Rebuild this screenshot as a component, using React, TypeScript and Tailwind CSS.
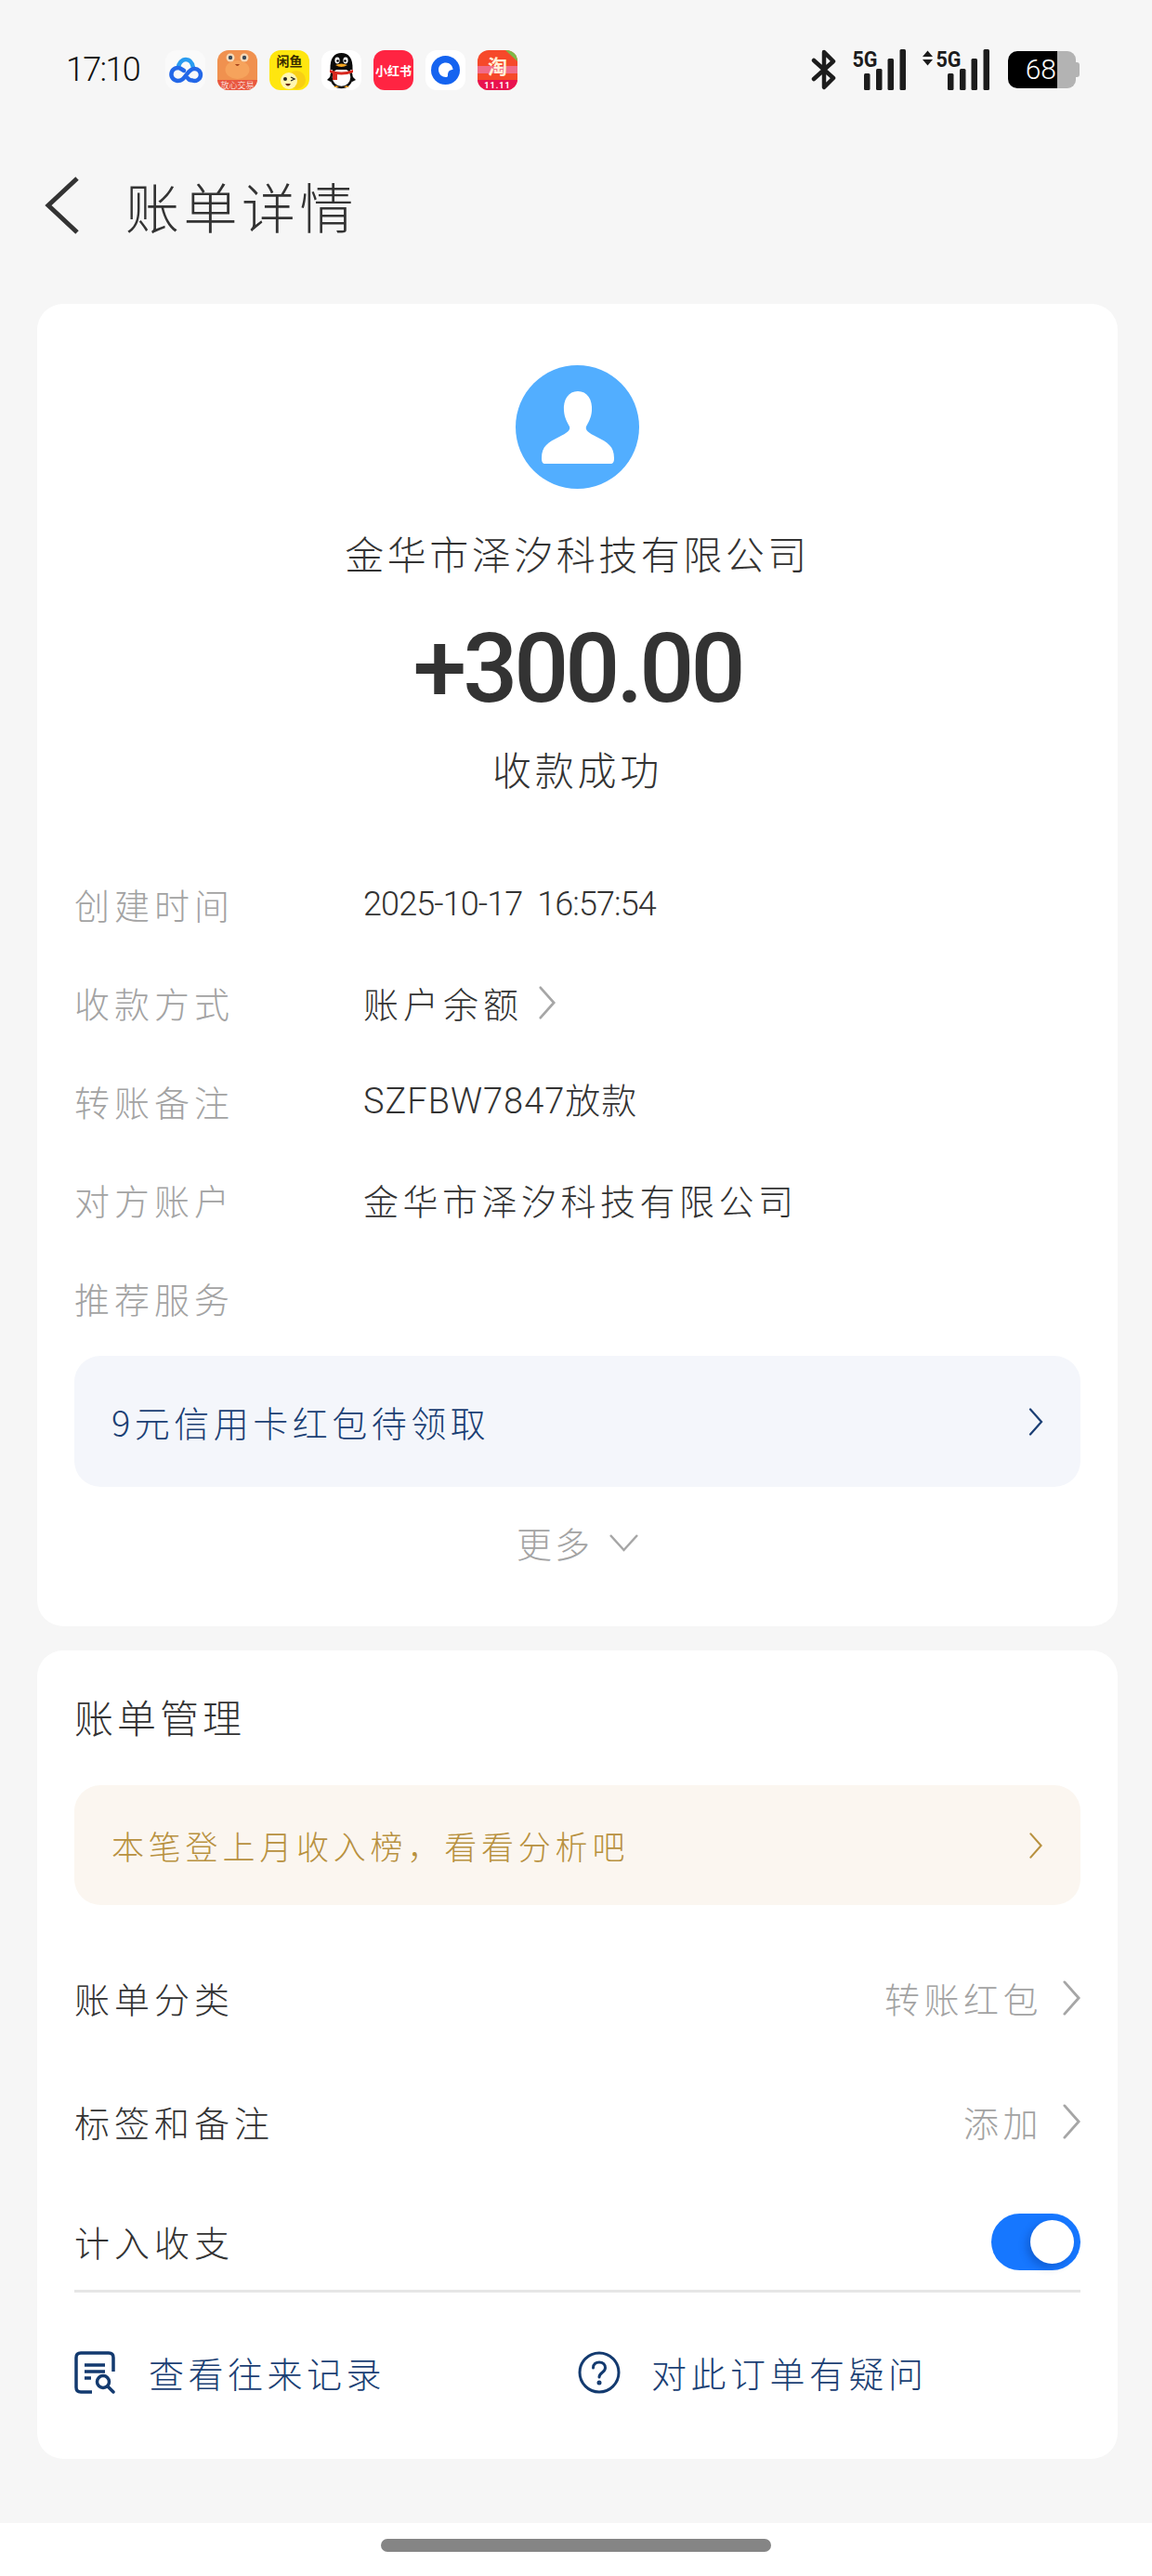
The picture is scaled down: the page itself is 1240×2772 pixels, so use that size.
const cjk = "font-['Noto_Sans_CJK_SC','Noto_Sans',sans-serif] font-light";

function Chevron({ className, color = "#a6a6a6", width = 3 }: { className: string; color?: string; width?: number }) {
  return (
    <svg viewBox="0 0 20 40" className={className} fill="none">
      <path d="M2 2 L18 20 L2 38" stroke={color} strokeWidth={width} strokeLinecap="round" strokeLinejoin="miter" />
    </svg>
  );
}

function AppIcon({ bg, children }: { bg: string; children: React.ReactNode }) {
  return (
    <div className={`w-[43px] h-[43px] rounded-[12px] overflow-hidden ${bg}`}>
      <svg viewBox="0 0 43 43" className="w-full h-full">
        {children}
      </svg>
    </div>
  );
}

function NetdiskIcon() {
  return (
    <AppIcon bg="bg-[#fafafa]">
      <path d="M14 19 C14 14 18 10 22 10 C26 10 29 13 30 19" fill="none" stroke="#2a9cf0" strokeWidth="4.500" strokeLinecap="round" />
      <path
        d="M20 22 L16 19.500 A7 7 0 1 0 13 33 C18 33 20 30 23 26 C26 22 28 20 31 20 A6.500 6.500 0 1 1 29 32.500 C27 32.500 25 31.500 24 30"
        fill="none"
        stroke="#2468e8"
        strokeWidth="4.500"
        strokeLinecap="round"
      />
    </AppIcon>
  );
}

function CrabIcon() {
  return (
    <AppIcon bg="bg-[#f0914f]">
      <ellipse cx="21.500" cy="21" rx="13" ry="10" fill="#f6a35c" />
      <circle cx="14" cy="8" r="4.500" fill="#f5d9b8" />
      <circle cx="29" cy="8" r="4.500" fill="#f5d9b8" />
      <circle cx="14" cy="8" r="2.200" fill="#3a4a5a" />
      <circle cx="29" cy="8" r="2.200" fill="#3a4a5a" />
      <path d="M19 15 Q21.500 19 24 15 Z" fill="#a8461d" />
      <rect x="0" y="32" width="43" height="11" fill="#e9573f" />
      <text x="21.500" y="40.500" textAnchor="middle" fontSize="9" fill="#fff" fontFamily="Noto Sans CJK SC">放心交易</text>
    </AppIcon>
  );
}

function XianyuIcon() {
  return (
    <AppIcon bg="bg-[#ffe60f]">
      <text x="21.500" y="17" textAnchor="middle" fontSize="14" fontWeight="700" fill="#3a2c00" fontFamily="Noto Sans CJK SC">闲鱼</text>
      <circle cx="29" cy="32" r="10" fill="#f8cf14" />
      <circle cx="21" cy="33" r="9" fill="#fff6b0" />
      <circle cx="17" cy="31" r="2" fill="#222" />
      <path d="M23 29 L27 31 L23 33" fill="none" stroke="#222" strokeWidth="1.300" />
      <path d="M17 36 Q20 41 23 36 Z" fill="#6b2a10" />
    </AppIcon>
  );
}

function QQIcon() {
  return (
    <AppIcon bg="bg-white">
      <ellipse cx="21.500" cy="29" rx="11" ry="11" fill="#fff" stroke="#111" strokeWidth="2.500" />
      <path d="M9.500 21 C9 8 14 3 21.500 3 C29 3 34 8 33.500 21 Z" fill="#0b0b0b" />
      <path d="M10 28 L6 32 L10 34 Z M33 28 L37 32 L33 34 Z" fill="#0b0b0b" />
      <ellipse cx="17" cy="11" rx="2.600" ry="3.400" fill="#fff" />
      <ellipse cx="26" cy="11" rx="2.600" ry="3.400" fill="#fff" />
      <circle cx="17.500" cy="11.500" r="1.300" fill="#000" />
      <circle cx="25.500" cy="11.500" r="1.300" fill="#000" />
      <path d="M15 16 Q21.500 13 28 16 Q21.500 20 15 16 Z" fill="#f5a623" />
      <path d="M9 21 Q21.500 26 34 21 L34 24 Q21.500 29 9 24 Z" fill="#d8281f" />
      <rect x="12" y="24" width="5" height="8" fill="#d8281f" />
      <path d="M13 40 L19 40 L16 38 Z M24 40 L30 40 L27 38 Z" fill="#f5a623" />
    </AppIcon>
  );
}

function XhsIcon() {
  return (
    <AppIcon bg="bg-[#ff2442]">
      <text x="21.500" y="26.500" textAnchor="middle" fontSize="13" fontWeight="700" fill="#fff" fontFamily="Noto Sans CJK SC">小红书</text>
    </AppIcon>
  );
}

function QuarkIcon() {
  return (
    <AppIcon bg="bg-white">
      <circle cx="21.500" cy="21.500" r="15.500" fill="#1463f0" />
      <path d="M14 21 C14 16 18 13.500 22 13.500 C26 13.500 29.500 17 29.500 21 C26 21 24 23 24 27 C24 28.500 23.500 29 22 29 C18 29 14 26 14 21 Z" fill="#fff" />
    </AppIcon>
  );
}

function TaobaoIcon() {
  return (
    <AppIcon bg="bg-[#f6492a]">
      <path d="M30 0 H43 V12 Z" fill="#7dbb48" />
      <rect x="0" y="17" width="43" height="8" fill="#f07ab0" opacity="0.7" />
      <text x="21.500" y="25" textAnchor="middle" fontSize="21" fontWeight="700" fill="#fff1d8" fontFamily="Noto Sans CJK SC">淘</text>
      <rect x="0" y="32" width="43" height="11" fill="#e9124f" />
      <text x="21.500" y="41" textAnchor="middle" fontSize="9" fontWeight="700" letterSpacing="1" fill="#fff" fontFamily="Roboto">11.11</text>
    </AppIcon>
  );
}

function Signal({ arrows }: { arrows?: boolean }) {
  return (
    <svg viewBox="0 0 70 44" className="w-[70px] h-[44px] overflow-visible">
      {arrows && <path d="M-2 8 L3.500 1.500 L9 8 Z M-2 11 L3.500 17.500 L9 11 Z" fill="#1c1c1c" />}
      <text x="12.500" y="19" fontSize="23" fontWeight="700" fill="#1c1c1c" fontFamily="Roboto" textLength="27" lengthAdjust="spacingAndGlyphs">5G</text>
      <rect x="25" y="26" width="6.500" height="18" rx="1.500" fill="#1c1c1c" />
      <rect x="38" y="21" width="6.500" height="23" rx="1.500" fill="#1c1c1c" />
      <rect x="50.500" y="10" width="6.500" height="34" rx="1.500" fill="#1c1c1c" />
      <rect x="63.500" y="0" width="6.500" height="44" rx="1.500" fill="#1c1c1c" />
    </svg>
  );
}

function StatusBar() {
  return (
    <div className="h-[130px] pt-[53px] pl-[71px] pr-[78px] flex items-start justify-between">
      <div className="flex items-center">
        <span className="w-[107px] text-[36px] leading-[44px] font-['Roboto',sans-serif] font-light text-[#111] tracking-[-1.700px]">17:10</span>
        <div className="flex gap-[13px]">
          <NetdiskIcon />
          <CrabIcon />
          <XianyuIcon />
          <QQIcon />
          <XhsIcon />
          <QuarkIcon />
          <TaobaoIcon />
        </div>
      </div>
      <div className="flex items-center">
        <svg viewBox="0 0 28 44" className="w-[28px] h-[44px] mr-[4px]" fill="none">
          <path d="M3 12 L24 31 L14 41 V3 L24 13 L3 32" stroke="#1c1c1c" strokeWidth="4.500" strokeLinejoin="round" strokeLinecap="round" />
        </svg>
        <Signal />
        <div className="ml-[20px]">
          <Signal arrows />
        </div>
        <div className="ml-[20px] flex items-center h-[40px]">
          <div className="w-[53px] h-[40px] bg-black rounded-l-[10px] flex items-center justify-end pr-[1px]">
            <span className="text-[30px] leading-none text-white font-['Roboto',sans-serif] font-light">68</span>
          </div>
          <div className="w-[20px] h-[40px] bg-[#b3b3b3] rounded-r-[9px]" />
          <div className="w-[4px] h-[16px] bg-[#b3b3b3] rounded-r-[3px]" />
        </div>
      </div>
    </div>
  );
}

function DetailRow({ label, children }: { label: string; children?: React.ReactNode }) {
  return (
    <div className="h-[106px] flex items-center">
      <span className="w-[311px] text-[#a3a3a3] text-[38px] leading-none tracking-[5px]">{label}</span>
      {children}
    </div>
  );
}

function SettingRow({ label, value }: { label: string; value: string }) {
  return (
    <div className="h-[133px] flex items-center justify-between">
      <span className="text-[#333] text-[38px] leading-none tracking-[5px]">{label}</span>
      <div className="flex items-center">
        <span className="text-[#a3a3a3] text-[38px] leading-none tracking-[4.500px]">{value}</span>
        <Chevron className="w-[19px] h-[38px] ml-[22px]" />
      </div>
    </div>
  );
}

export default function App() {
  return (
    <div className={`w-[1240px] h-[2772px] bg-[#f6f6f6] flex flex-col overflow-hidden ${cjk}`}>
      <StatusBar />

      {/* title */}
      <div className="h-[197px] pb-[16px] pl-[48px] flex items-center">
        <svg viewBox="0 0 38 62" className="w-[38px] h-[62px]" fill="none">
          <path d="M35 2 L4 31 L35 60" stroke="#333" strokeWidth="5" />
        </svg>
        <h1 className="ml-[49px] text-[58px] leading-none font-light text-[#333] tracking-[4.500px]">账单详情</h1>
      </div>

      <div className="pl-[40px] pr-[37px] flex flex-col gap-[26px]">
        {/* detail card */}
        <div className="h-[1423px] bg-white rounded-[28px] px-[40px] pt-[66px]">
          <div className="flex flex-col items-center">
            <div className="w-[133px] h-[133px] rounded-full bg-[#52aeff] flex items-center justify-center">
              <svg viewBox="0 0 80 80" className="w-[80px] h-[80px]" fill="#fff">
                <path d="M40 1 C50 1 56 10 55 22 C54.500 30 51 35 49 39 C47.500 43 52 46 60 50 C72 56 79 60 79 73 C79 77 78 79 75 79 H5 C2 79 1 77 1 73 C1 60 8 56 20 50 C28 46 32.500 43 31 39 C29 35 25.500 30 25 22 C24 10 30 1 40 1 Z" />
              </svg>
            </div>
            <div className="mt-[46px] text-[42px] leading-[46px] text-[#333] tracking-[3.500px]">金华市泽汐科技有限公司</div>
            <div className="mt-[52px] h-[100px] flex items-center text-[104px] leading-none font-['Roboto',sans-serif] font-medium text-[#333] tracking-[-4px]">+300.00</div>
            <div className="mt-[32px] text-[42px] leading-[50px] text-[#333] tracking-[3.800px]">收款成功</div>
          </div>

          <div className="mt-[68px] flex flex-col">
            <DetailRow label="创建时间">
              <span className="text-[36px] leading-none font-['Roboto',sans-serif] font-light text-[#333] whitespace-pre tracking-[-0.900px]">2025-10-17  16:57:54</span>
            </DetailRow>
            <DetailRow label="收款方式">
              <span className="text-[38px] leading-none text-[#333] tracking-[5px]">账户余额</span>
              <Chevron className="w-[20px] h-[36px] ml-[16px]" />
            </DetailRow>
            <DetailRow label="转账备注">
              <span className="text-[38px] leading-none font-['Roboto','Noto_Sans_CJK_SC',sans-serif] font-light text-[#333] tracking-[1px]">SZFBW7847放款</span>
            </DetailRow>
            <DetailRow label="对方账户">
              <span className="text-[38px] leading-none text-[#333] tracking-[4.500px]">金华市泽汐科技有限公司</span>
            </DetailRow>
            <DetailRow label="推荐服务" />
          </div>

          <div className="mt-[9px] h-[141px] rounded-[28px] bg-[#f4f6fb] pl-[40px] pr-[39px] flex items-center justify-between">
            <span className="text-[38px] leading-none text-[#1b3f74] tracking-[4.500px]">9元信用卡红包待领取</span>
            <Chevron className="w-[18px] h-[30px]" color="#1b3f74" />
          </div>

          <div className="mt-[41px] flex items-center justify-center">
            <span className="text-[38px] leading-none text-[#a3a3a3] tracking-[3px]">更多</span>
            <svg viewBox="0 0 31 19" className="w-[31px] h-[19px] ml-[18px]" fill="none">
              <path d="M1 1 L15.500 17 L30 1" stroke="#a6a6a6" strokeWidth="2.500" />
            </svg>
          </div>
        </div>

        {/* bill management card */}
        <div className="h-[870px] bg-white rounded-[28px] px-[40px] pt-[44px]">
          <div className="text-[42px] leading-[54px] text-[#333] tracking-[4px]">账单管理</div>
          <div className="mt-[47px] h-[129px] rounded-[28px] bg-[#fbf6f0] pl-[40px] pr-[39px] flex items-center justify-between">
            <span className="text-[35px] leading-none text-[#b8913f] tracking-[4.800px]">本笔登上月收入榜，看看分析吧</span>
            <Chevron className="w-[18px] h-[28px]" color="#b8913f" />
          </div>
          <div className="mt-[33px]">
            <SettingRow label="账单分类" value="转账红包" />
            <SettingRow label="标签和备注" value="添加" />
          </div>
          <div className="h-[130px] -mt-[2px] flex items-center justify-between">
            <span className="text-[#333] text-[38px] leading-none tracking-[5px]">计入收支</span>
            <div className="w-[96px] h-[61px] rounded-full bg-[#1677ff] flex items-center justify-end pr-[7px]">
              <div className="w-[47px] h-[47px] rounded-full bg-white shadow-[-4px_4px_8px_rgba(0,40,120,0.3)]" />
            </div>
          </div>
          <div className="-mt-[13px] h-[3px] bg-[#e6e6e6]" />
          <div className="mt-[63px] flex items-center">
            <div className="w-[542px] flex items-center">
              <svg viewBox="0 0 46 46" className="w-[46px] h-[46px]" fill="none" stroke="#133a6f" strokeWidth="3.500">
                <path d="M19 44 H7 Q2 44 2 39 V7 Q2 2 7 2 H37 Q42 2 42 7 V22" />
                <path d="M11 15 H33 M11 22 H33 M11 29 H18" />
                <circle cx="31" cy="33" r="6.500" />
                <path d="M36 38 L42 44" strokeLinecap="round" />
              </svg>
              <span className="ml-[34px] text-[38px] leading-none text-[#1b3f74] tracking-[4.500px]">查看往来记录</span>
            </div>
            <svg viewBox="0 0 46 46" className="w-[46px] h-[46px]" fill="none" stroke="#133a6f" strokeWidth="3">
              <circle cx="23" cy="23" r="21" />
              <path d="M16.500 18 C16.500 14 19.500 12 23 12 C27 12 29.500 14.500 29.500 18 C29.500 23 23 23 23 28" strokeLinecap="round" />
              <circle cx="23" cy="34" r="1" fill="#133a6f" />
            </svg>
            <span className="ml-[33px] text-[38px] leading-none text-[#1b3f74] tracking-[4.500px]">对此订单有疑问</span>
          </div>
        </div>
      </div>

      {/* home bar */}
      <div className="mt-[69px] flex-1 bg-white flex justify-center pt-[17px]">
        <div className="w-[420px] h-[14px] rounded-full bg-[#858585]" />
      </div>
    </div>
  );
}
